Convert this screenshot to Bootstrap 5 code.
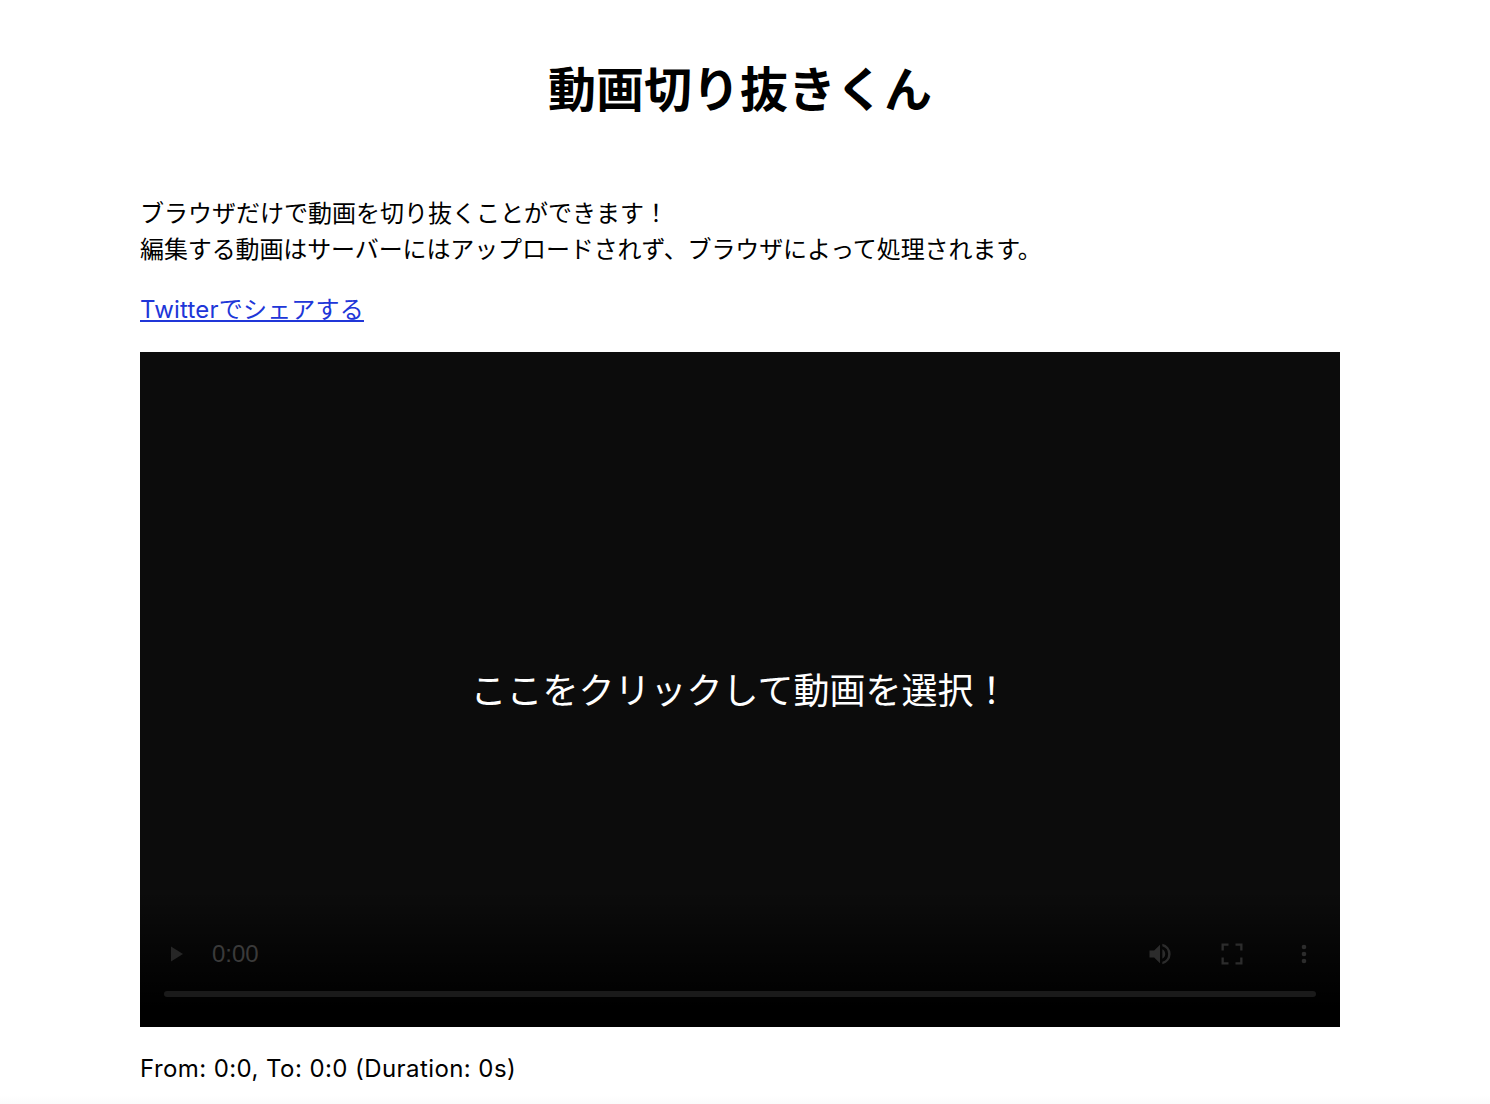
<!DOCTYPE html>
<html lang="ja">
<head>
<meta charset="utf-8">
<title>動画切り抜きくん</title>
<link href="https://cdn.jsdelivr.net/npm/bootstrap@5.3.0/dist/css/bootstrap.min.css" rel="stylesheet">
<style>
body{background:linear-gradient(to bottom,#fff 1096px,#fbfbfb 1104px);color:#000;font-family:"Inter","Noto Sans CJK JP",sans-serif;font-size:24px;line-height:36px;overflow:hidden;height:1104px}
.page-wrap{width:1200px;margin-left:140px}
.page-title{font-family:"Noto Sans CJK JP",sans-serif;font-size:48px;font-weight:700;line-height:72px;text-align:center;margin:50px 0 74px}
.intro-text{margin:0 0 24px;line-height:36px}
.tight-line{letter-spacing:-.11px}
.share-link{color:#2036d8;letter-spacing:.2px}
.video-box{height:675px;background:#0c0c0c;overflow:hidden}
.video-msg{color:#fff;font-size:36px;top:1px}
.video-shade{height:137px;left:0;right:0;bottom:0;background:linear-gradient(to bottom,rgba(0,0,0,0),#000 85%)}
.video-ctl{left:24px;right:24px;bottom:30px;height:6px;background:#1a1a1a;border-radius:3px}
.ctl-row{left:24px;right:24px;bottom:57px;height:32px;color:#3a3a3a;font-family:"Liberation Sans",sans-serif;font-size:24px;line-height:32px}
.ctl-time{margin-left:24px}
.ctl-icon{fill:#2c2c2c;width:28px;height:28px;margin-left:44px}
.ctl-end{margin-right:-2px}
.play-icon{fill:#262626;width:24px;height:24px}
.range-text{margin:24px 0 0;letter-spacing:.42px}
</style>
</head>
<body>
<div class="page-wrap">
  <h1 class="page-title">動画切り抜きくん</h1>
  <p class="intro-text">ブラウザだけで動画を切り抜くことができます！<br><span class="tight-line">編集する動画はサーバーにはアップロードされず、ブラウザによって処理されます。</span></p>
  <p class="intro-text"><a class="share-link" href="#">Twitterでシェアする</a></p>
  <div class="video-box position-relative d-flex align-items-center justify-content-center">
    <div class="video-shade position-absolute"></div>
    <span class="video-msg position-relative">ここをクリックして動画を選択！</span>
    <div class="ctl-row position-absolute d-flex align-items-center">
      <svg class="play-icon" viewBox="0 0 24 24"><path d="M7 4.5v15l12-7.5z"/></svg>
      <span class="ctl-time">0:00</span>
      <span class="flex-grow-1"></span>
      <svg class="ctl-icon" viewBox="0 0 24 24"><path d="M3 9v6h4l5 5V4L7 9H3zm13.5 3A4.5 4.5 0 0 0 14 8v8a4.5 4.5 0 0 0 2.5-4zM14 3.2v2.1a7 7 0 0 1 0 13.4v2.1a9 9 0 0 0 0-17.6z"/></svg>
      <svg class="ctl-icon" viewBox="0 0 24 24"><path d="M5 15H3v6h6v-2H5v-4zM3 9h2V5h4V3H3v6zm16 10h-4v2h6v-6h-2v4zM15 3v2h4v4h2V3h-6z"/></svg>
      <svg class="ctl-icon ctl-end" viewBox="0 0 24 24"><path d="M12 8a2 2 0 1 0 0-4 2 2 0 0 0 0 4zm0 2a2 2 0 1 0 0 4 2 2 0 0 0 0-4zm0 6a2 2 0 1 0 0 4 2 2 0 0 0 0-4z"/></svg>
    </div>
    <div class="video-ctl position-absolute"></div>
  </div>
  <p class="range-text">From: 0:0, To: 0:0 (Duration: 0s)</p>
</div>
<script src="https://cdn.jsdelivr.net/npm/bootstrap@5.3.0/dist/js/bootstrap.bundle.min.js"></script>
</body>
</html>
